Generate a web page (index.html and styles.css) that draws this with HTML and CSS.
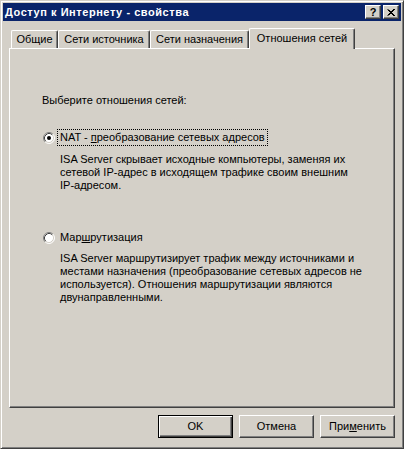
FILE: index.html
```html
<!DOCTYPE html>
<html lang="ru">
<head>
<meta charset="utf-8">
<title>Доступ к Интернету - свойства</title>
<link rel="stylesheet" href="styles.css">
</head>
<body>
<div class="window">
  <div class="titlebar">
    <span class="title">Доступ к Интернету - свойства</span>
    <div class="caption-buttons">
      <span class="cap-btn help">?</span>
      <span class="cap-btn close">
        <svg width="8" height="7" viewBox="0 0 8 7"><path d="M0.5 0.5 L7 7 M1.5 0.5 L8 7 M7 0 L0.5 6.5 M8 0 L1.5 6.5" stroke="#000" stroke-width="1" fill="none"/></svg>
      </span>
    </div>
  </div>
  <div class="body">
    <div class="tabs">
      <div class="tab t1">Общие</div>
      <div class="tab t2">Сети источника</div>
      <div class="tab t3">Сети назначения</div>
      <div class="tab t4 selected">Отношения сетей</div>
    </div>
    <div class="panel">
      <div class="heading">Выберите отношения сетей:</div>
      <div class="option first">
        <div class="radio-row">
          <svg class="radio" width="12" height="12" viewBox="0 0 12 12">
            <circle cx="6" cy="6" r="5" fill="#fff"/>
            <path d="M2.11 9.89A5.5 5.5 0 0 1 9.89 2.11" stroke="#808080" fill="none"/>
            <path d="M9.89 2.11A5.5 5.5 0 0 1 2.11 9.89" stroke="#fff" fill="none"/>
            <path d="M2.82 9.18A4.5 4.5 0 0 1 9.18 2.82" stroke="#404040" fill="none"/>
            <path d="M9.18 2.82A4.5 4.5 0 0 1 2.82 9.18" stroke="#d4d0c8" fill="none"/>
            <circle cx="6" cy="6" r="2" fill="#000"/>
          </svg>
          <span class="label focused">NAT - <u>п</u>реобразование сетевых адресов</span>
        </div>
        <p class="desc">ISA Server скрывает исходные компьютеры, заменяя их<br>сетевой IP-адрес в исходящем трафике своим внешним<br>IP-адресом.</p>
      </div>
      <div class="option second">
        <div class="radio-row">
          <svg class="radio" width="12" height="12" viewBox="0 0 12 12">
            <circle cx="6" cy="6" r="5" fill="#fff"/>
            <path d="M2.11 9.89A5.5 5.5 0 0 1 9.89 2.11" stroke="#808080" fill="none"/>
            <path d="M9.89 2.11A5.5 5.5 0 0 1 2.11 9.89" stroke="#fff" fill="none"/>
            <path d="M2.82 9.18A4.5 4.5 0 0 1 9.18 2.82" stroke="#404040" fill="none"/>
            <path d="M9.18 2.82A4.5 4.5 0 0 1 2.82 9.18" stroke="#d4d0c8" fill="none"/>
          </svg>
          <span class="label">Мар<u>ш</u>рутизация</span>
        </div>
        <p class="desc">ISA Server маршрутизирует трафик между источниками и<br>местами назначения (преобразование сетевых адресов не<br>используется). Отношения маршрутизации являются<br>двунаправленными.</p>
      </div>
    </div>
    <div class="buttons">
      <div class="btn default">OK</div>
      <div class="btn">Отмена</div>
      <div class="btn">При<u>м</u>енить</div>
    </div>
  </div>
</div>
</body>
</html>
```
FILE: styles.css
```css
* { box-sizing: border-box; }
html, body { margin: 0; padding: 0; }
body {
  width: 404px;
  height: 449px;
  background: #d4d0c8;
  font-family: "Liberation Sans", Arial, sans-serif;
  font-size: 11px;
  line-height: 13px;
  color: #000;
}
.window {
  width: 404px;
  height: 449px;
  border: 1px solid;
  border-color: #d4d0c8 #404040 #404040 #d4d0c8;
  box-shadow: inset 1px 1px #fff, inset -1px -1px #808080;
  padding: 2px;
  display: flex;
  flex-direction: column;
  background: #d4d0c8;
}
.titlebar {
  height: 18px;
  background: #0a246a;
  color: #fff;
  display: flex;
  align-items: center;
  justify-content: space-between;
  padding: 0 2px 0 2px;
}
.title {
  font-weight: bold;
  font-size: 11px;
  letter-spacing: 0.55px;
}
.caption-buttons { display: flex; gap: 2px; }
.cap-btn {
  width: 16px;
  height: 14px;
  background: #d4d0c8;
  border: 1px solid;
  border-color: #fff #404040 #404040 #fff;
  box-shadow: inset -1px -1px #808080;
  color: #000;
  display: flex;
  align-items: center;
  justify-content: center;
  font-weight: bold;
  font-size: 11px;
  line-height: 12px;
}
.cap-btn.close svg { display: block; }
.body {
  flex: 1;
  padding: 7px 6px 0 6px;
  display: flex;
  flex-direction: column;
}
.tabs {
  height: 20px;
  display: flex;
  align-items: flex-end;
  padding-left: 2px;
  position: relative;
  z-index: 1;
}
.tab {
  height: 18px;
  border-top: 1px solid #fff;
  border-left: 1px solid #fff;
  border-right: 1px solid #404040;
  box-shadow: inset -1px 0 #808080;
  border-radius: 2px 2px 0 0;
  text-align: center;
  padding-top: 2px;
  white-space: nowrap;
}
.t1 { width: 47px; }
.t2 { width: 92px; }
.t3 { width: 99px; }
.t4 { width: 106px; }
.tab.selected {
  height: 21px;
  margin-bottom: -1px;
  background: #d4d0c8;
  padding-top: 3px;
}
.panel {
  height: 360px;
  border: 1px solid;
  border-color: #fff #404040 #404040 #fff;
  box-shadow: inset -1px -1px #808080;
  padding: 45px 0 0 32px;
}
.heading { height: 13px; }
.option.first { margin-top: 24px; }
.option.second { margin-top: 39px; }
.radio-row {
  display: flex;
  align-items: center;
  height: 13px;
  margin-left: 1px;
}
.radio { display: block; flex: none; }
.label {
  margin-left: 4px;
  padding: 0 1px;
}
.label.focused {
  outline: 1px dotted #000;
  outline-offset: 1px;
}
.desc {
  margin: 9px 0 0 18px;
}
.option.second .desc { margin-top: 8px; }
.buttons {
  margin-top: 7px;
  display: flex;
  justify-content: flex-end;
  gap: 6px;
}
.btn {
  width: 75px;
  height: 23px;
  border: 1px solid;
  border-color: #fff #404040 #404040 #fff;
  box-shadow: inset -1px -1px #808080;
  display: flex;
  align-items: center;
  justify-content: center;
}
.btn.default {
  border-color: #000;
  box-shadow: inset 1px 1px #fff, inset -1px -1px #404040, inset -2px -2px #808080;
}
```
